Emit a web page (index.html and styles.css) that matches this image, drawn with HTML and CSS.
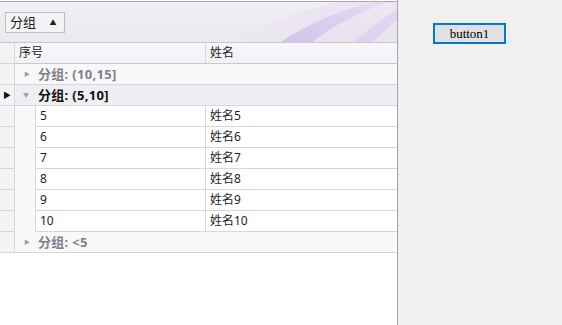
FILE: index.html
```html
<!DOCTYPE html>
<html lang="zh">
<head>
  <meta charset="UTF-8">
  <title>GridControl</title>
  <link rel="stylesheet" href="styles.css">
</head>
<body>
  <div class="form">
    <div class="grid">
      <div class="group-panel">
        <svg class="swoosh" width="200" height="40" viewBox="0 0 200 40">
          <defs>
            <linearGradient id="g1" x1="0" y1="1" x2="1" y2="0">
              <stop offset="0" stop-color="#c8b8ec" stop-opacity="0.7"/>
              <stop offset="1" stop-color="#b9aee8" stop-opacity="0.12"/>
            </linearGradient>
            <linearGradient id="g2" x1="0" y1="0" x2="1" y2="0">
              <stop offset="0" stop-color="#f0e4f2" stop-opacity="0"/>
              <stop offset="0.6" stop-color="#eadcf0" stop-opacity="0.6"/>
              <stop offset="1" stop-color="#ead6ee" stop-opacity="0.3"/>
            </linearGradient>
          </defs>
          <path d="M10 40 C50 30 90 12 140 0 L200 0 L200 40 Z" fill="url(#g2)"/>
          <path d="M84 40 C110 22 148 6 178 0 L192 0 C158 12 132 26 116 40 Z" fill="url(#g1)"/>
          <path d="M156 40 C174 26 188 14 200 8 L200 18 C192 24 184 32 176 40 Z" fill="#cdbfee" opacity="0.4"/>
        </svg>
        <div class="group-box">分组 <span class="up">▲</span></div>
      </div>

      <div class="row header">
        <div class="ind"></div>
        <div class="cell c1">序号</div>
        <div class="cell c2">姓名</div>
      </div>

      <div class="row group">
        <div class="ind"></div>
        <div class="gcell"><span class="exp">▶</span><b>分组: (10,15]</b></div>
      </div>

      <div class="row group focused">
        <div class="ind"><span class="cur">▶</span></div>
        <div class="gcell"><span class="exp down">▼</span><b>分组: (5,10]</b></div>
      </div>

      <div class="row data">
        <div class="ind"></div><div class="indent"></div>
        <div class="cell c1">5</div><div class="cell c2">姓名5</div>
      </div>
      <div class="row data">
        <div class="ind"></div><div class="indent"></div>
        <div class="cell c1">6</div><div class="cell c2">姓名6</div>
      </div>
      <div class="row data">
        <div class="ind"></div><div class="indent"></div>
        <div class="cell c1">7</div><div class="cell c2">姓名7</div>
      </div>
      <div class="row data">
        <div class="ind"></div><div class="indent"></div>
        <div class="cell c1">8</div><div class="cell c2">姓名8</div>
      </div>
      <div class="row data">
        <div class="ind"></div><div class="indent"></div>
        <div class="cell c1">9</div><div class="cell c2">姓名9</div>
      </div>
      <div class="row data">
        <div class="ind"></div><div class="indent"></div>
        <div class="cell c1">10</div><div class="cell c2">姓名10</div>
      </div>

      <div class="row group">
        <div class="ind"></div>
        <div class="gcell"><span class="exp">▶</span><b>分组: &lt;5</b></div>
      </div>
    </div>

    <div class="side">
      <button class="btn">button1</button>
    </div>
  </div>
</body>
</html>
```

FILE: styles.css
```css
body {
  margin: 0;
  padding: 0;
  font-family: "Noto Sans", "Noto Sans CJK SC", sans-serif;
  font-size: 12px;
  color: #1e1e1e;
}

.form {
  display: flex;
  width: 562px;
  height: 325px;
  background: #f0f0f0;
}

.grid {
  width: 397px;
  height: 325px;
  background: #ffffff;
  border-right: 1px solid #a3a3ab;
  overflow: hidden;
}

.group-panel {
  position: relative;
  height: 30px;
  margin-top: 1px;
  border-top: 1px solid #a8a8b0;
  background: linear-gradient(#f0f0f3, #e9eaee);
  padding: 10px 0 0 5px;
}

.swoosh {
  position: absolute;
  right: 0;
  top: 0;
}

.group-box {
  position: relative;
  width: 54px;
  height: 19px;
  line-height: 19px;
  border: 1px solid #b9bdc6;
  background: #f4f4f6;
  padding-left: 4px;
  font-size: 13px;
}

.group-box .up {
  font-size: 7px;
  margin-left: 10px;
  vertical-align: 2px;
}

.row {
  display: flex;
  height: 21px;
  line-height: 20px;
}

.ind {
  width: 14px;
  flex: none;
  background: #f4f4f6;
  border-right: 1px solid #d6d6dc;
  border-bottom: 1px solid #d6d6dc;
  position: relative;
}

.cur {
  position: absolute;
  left: 3px;
  top: 0;
  font-size: 8px;
  color: #111;
}

.cell {
  padding-left: 4px;
  border-bottom: 1px solid #d6d6dc;
  white-space: nowrap;
}

.c1 {
  width: 186px;
  flex: none;
  border-right: 1px solid #d6d6dc;
}

.c2 {
  flex: 1;
}

.header {
  border-top: 1px solid #c9c9d0;
  background: linear-gradient(#f7f7f9, #f1f2f5);
}

.header .ind {
  background: #f3f3f6;
}

.header .cell {
  border-bottom-color: #c9c9d0;
  color: #222;
}

.group {
  height: 20px;
  background: #f8f8fa;
  border-bottom: 1px solid #d6d6dc;
}

.group .ind {
  border-bottom: none;
}

.group.focused {
  background: #eeeff2;
}

.gcell {
  flex: 1;
  color: #7f7f88;
  position: relative;
  padding-left: 23px;
  font-size: 13px;
  letter-spacing: 0.3px;
}

.focused .gcell {
  color: #111;
}

.exp {
  position: absolute;
  left: 9px;
  top: 0;
  font-size: 6px;
  color: #a0a0a8;
}

.exp.down {
  left: 8px;
}

.data .indent {
  width: 20px;
  flex: none;
  background: #f8f8fa;
  border-right: 1px solid #d6d6dc;
}

.data .c1 {
  width: 165px;
  background: #fff;
}

.data .c2 {
  background: #fff;
}

.side {
  flex: 1;
  padding: 23px 0 0 35px;
}

.btn {
  width: 73px;
  height: 21px;
  padding: 0;
  border: 2px solid #0078d7;
  background: #e1e1e1;
  font-family: "Liberation Serif", serif;
  font-size: 13px;
  color: #000;
}
```
